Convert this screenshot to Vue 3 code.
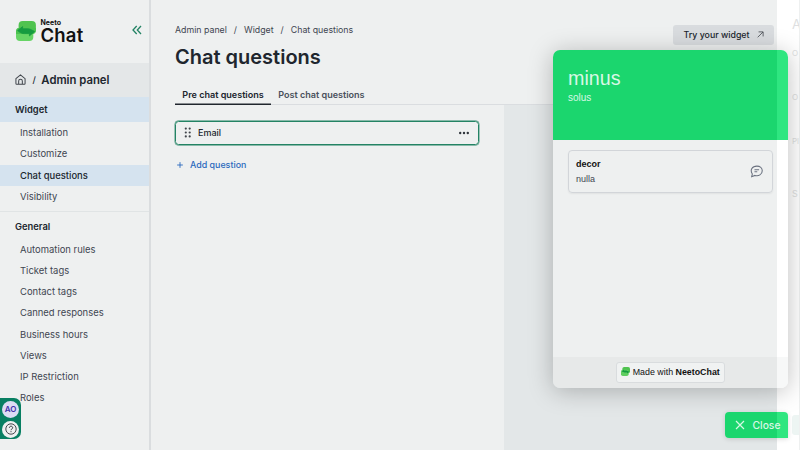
<script setup>
const widgetItems = ['Installation', 'Customize', 'Chat questions', 'Visibility']
const generalItems = ['Automation rules', 'Ticket tags', 'Contact tags', 'Canned responses', 'Business hours', 'Views', 'IP Restriction', 'Roles']
</script>

<template>
  <div class="page">
    <aside class="sidebar">
      <div class="brand">
        <svg class="logo" viewBox="0 0 20 20" width="20" height="20">
          <rect x="2.6" y="0" width="17.3" height="13" rx="4" fill="#50c350" />
          <rect x="0" y="7" width="17.3" height="13" rx="4" fill="#66d465" />
          <path d="M2.6 7h17.3v2q0 4-4 4H0v-2q0-4 2.6-4z" fill="#4cc250" />
          <path d="M1.6 9.6 6.6 5.6v2.2h5.2c2 0 3.2.8 5.4 1.9l1.4.8-5.2 4.4v-2.3H8.2c-2 0-2.6-.5-4.6-1.5z" fill="#159b40" stroke="#159b40" stroke-width=".8" stroke-linejoin="round" />
        </svg>
        <div class="wordmark"><span class="neeto">Neeto</span><span class="chat">Chat</span></div>
        <svg class="collapse" viewBox="0 0 10 10" width="10" height="10" fill="none" stroke="#238364" stroke-width="1.3"><path d="M4.7 1 1 5l3.7 4M9 1 5.3 5 9 9" /></svg>
      </div>
      <div class="panel-title">
        <svg viewBox="0 0 12 12" width="11" height="11" fill="none" stroke="#41464c" stroke-width="1.1"><path d="M1 5.1 6 .9l5 4.2v5.2q0 .8-.8.8H1.8q-.8 0-.8-.8zM4 11V7.6a2 2 0 0 1 4 0V11" /></svg>
        <span class="slash">/</span><span>Admin panel</span>
      </div>
      <div class="section active">Widget</div>
      <nav>
        <div v-for="item in widgetItems" :key="item" class="item" :class="{ active: item === 'Chat questions' }">{{ item }}</div>
      </nav>
      <div class="divider"></div>
      <div class="section general">General</div>
      <nav>
        <div v-for="item in generalItems" :key="item" class="item">{{ item }}</div>
      </nav>
    </aside>

    <main>
      <header>
        <div class="crumbs"><span>Admin panel</span><span>/</span><span>Widget</span><span>/</span><span>Chat questions</span></div>
        <h1>Chat questions</h1>
        <button class="try">Try your widget
          <svg viewBox="0 0 8 8" width="7" height="7" fill="none" stroke="#41464c" stroke-width=".9"><path d="M.8 7.2 6.8 1.2M1.8 1h5.2v5.2" /></svg>
        </button>
      </header>
      <div class="tabs"><span class="tab selected">Pre chat questions</span><span class="tab">Post chat questions</span></div>
      <div class="content">
        <section class="questions">
          <div class="question">
            <svg viewBox="0 0 8 11" width="8" height="11" fill="#41464c"><circle cx="1.8" cy="1.6" r="1.1" /><circle cx="5.7" cy="1.6" r="1.1" /><circle cx="1.8" cy="5.5" r="1.1" /><circle cx="5.7" cy="5.5" r="1.1" /><circle cx="1.8" cy="9.4" r="1.1" /><circle cx="5.7" cy="9.4" r="1.1" /></svg>
            <span class="email">Email</span>
            <svg viewBox="0 0 12 4" width="12" height="4" fill="#2f343b"><circle cx="2.2" cy="2" r="1.2" /><circle cx="6" cy="2" r="1.2" /><circle cx="9.8" cy="2" r="1.2" /></svg>
          </div>
          <div class="add"><svg viewBox="0 0 8 8" width="6" height="6" stroke="#2a69bd" stroke-width="1.2"><path d="M4 .2v7.6M.2 4h7.6" /></svg><span>Add question</span></div>
        </section>
        <div class="preview"></div>
      </div>
    </main>

    <div class="drawer">
      <span class="ghost big">A</span><span class="ghost g1">O</span><span class="ghost g2">O</span><span class="ghost g3">Pl</span><span class="ghost g4">S</span><i></i>
    </div>

    <div class="widget">
      <div class="hero"><div class="hello">minus</div><div class="sub">solus</div></div>
      <div class="body">
        <div class="card">
          <div><b>decor</b><p>nulla</p></div>
          <svg viewBox="0 0 14 14" width="13" height="13" fill="none" stroke="#6b7280" stroke-width="1.15"><path d="M1.8 12.6 2.5 9.7C-.3 5.5 2.3 1.2 7.4 1.2c3.4 0 5.8 2.2 5.8 5.1 0 4-4 6-7.8 4.9zM4.8 5.1h5M4.8 7.2h3" /></svg>
        </div>
      </div>
      <div class="foot"><div class="made">
        <svg viewBox="0 0 20 20" width="9" height="9"><rect x="3" width="17" height="14" rx="4" fill="#50c350" /><rect y="6" width="17" height="14" rx="4" fill="#5fce60" /><path d="M1.5 9.8 6.6 5.8v2h5.2l6.7 2.6-5.1 4v-2H8.2z" fill="#159b40" /></svg>
        <span>Made with <b>NeetoChat</b></span>
      </div></div>
    </div>

    <div class="close">
      <svg viewBox="0 0 10 10" width="10" height="10" stroke="#d8f8e5" stroke-width="1.2"><path d="m1 1 8 8M9 1 1 9" /></svg><span>Close</span>
    </div>

    <div class="dock">
      <span class="avatar">AO</span>
      <span class="help"><svg viewBox="0 0 12 12" width="12" height="12" fill="none" stroke="#32363b"><circle cx="6" cy="6" r="5.2" stroke-width=".9" /><path d="M4.4 4.8c0-2.2 3.3-2.1 3.3 0 0 1.2-1.7 1.1-1.7 2.4M6 8.2v1" stroke-width="1" /></svg></span>
    </div>
  </div>
</template>

<style>
body { margin: 0; overflow: hidden; }
</style>

<style scoped>
* { box-sizing: border-box; }
svg { display: block; flex: none; }
.page { position: relative; display: flex; width: 800px; height: 450px; overflow: hidden; background: #eef0f0; font-family: Inter, sans-serif; color: #20262e; white-space: nowrap; }
.sidebar { width: 151px; flex: none; border-right: 2px solid #dadddf; }
.brand { height: 62.5px; display: flex; padding: 21px 0 0 15.5px; }
.wordmark { display: flex; flex-direction: column; margin-left: 5px; width: 44px; color: #111; }
.neeto { font: 700 7px/6px Inter, sans-serif; letter-spacing: 0; margin-top: -1px; }
.chat { font: 600 18.5px/19px Inter, sans-serif; letter-spacing: .2px; }
.collapse { margin: 4px 0 0 47px; }
.panel-title { height: 34.5px; background: #e4e7e8; display: flex; align-items: center; padding-left: 14.5px; font-size: 11.3px; font-weight: 600; }
.slash { font-size: 9px; margin: 0 5.5px 0 7px; font-weight: 500; }
.section { height: 25px; line-height: 25px; padding-left: 15px; font-size: 9.4px; font-weight: 600; }
.active { background: #d5e3ef; }
.item { height: 21.25px; line-height: 21.25px; padding-left: 20px; font-size: 9.45px; color: #3e4651; }
.item.active { font-weight: 500; color: #20262e; }
.divider { height: 1px; background: #e0e4e5; margin-top: 3.5px; }
.general { height: 27px; line-height: 30px; }
main { width: 626px; flex: none; }
header { position: relative; height: 86px; padding: 23px 0 0 24px; }
.crumbs { display: flex; gap: 7px; font-size: 8.8px; line-height: 14px; color: #3e4651; }
h1 { margin: 7px 0 0; font-size: 20px; line-height: 26px; font-weight: 600; letter-spacing: 0; }
.try { position: absolute; right: 3px; top: 25px; width: 101px; height: 20px; display: flex; align-items: center; gap: 7px; padding: 0 0 1px 10.5px; border: 0; border-radius: 3px; background: #d9dcdf; color: #20262e; font: 500 8.8px Inter, sans-serif; }
.tabs { height: 19px; display: flex; margin-left: 24px; border-bottom: 1px solid #dadde0; }
.tab { height: 19px; line-height: 18px; padding: 0 7.3px; font-size: 9.05px; font-weight: 600; color: #4a515c; }
.tab.selected { color: #20262e; box-shadow: inset 0 -1.5px #20262e; }
.content { display: flex; height: 345px; }
.questions { width: 353px; padding: 15.5px 24px 0; }
.question { display: flex; align-items: center; width: 304px; height: 24.5px; border: 1px solid #238364; box-shadow: 0 0 0 .4px #238364; border-radius: 3.5px; padding: 0 8.5px 0 8px; font-size: 9px; font-weight: 500; }
.email { flex: 1; margin-left: 6px; }
.add { display: flex; align-items: center; gap: 7px; margin-top: 14px; padding-left: 2px; line-height: 12px; font-size: 8.9px; font-weight: 550; color: #2a69bd; }
.preview { flex: 1; background: #e3e7e8; }
.drawer { position: relative; width: 23px; flex: none; background: #fff; border-right: 1px solid #eef0f0; overflow: hidden; }
.drawer i { position: absolute; right: 0; top: 415px; width: 7px; height: 20px; border-radius: 3px 0 0 3px; background: #edf5f3; }
.ghost { position: absolute; left: 15px; font-size: 8px; line-height: 10px; color: #dedfe1; }
.big { top: 17px; font-size: 13px; line-height: 15px; }
.g1 { top: 48px; } .g2 { top: 92px; } .g3 { top: 136px; } .g4 { top: 189px; font-size: 9px; }
.widget { position: absolute; left: 553px; top: 50px; width: 234.5px; height: 337.5px; border-radius: 7px; display: flex; flex-direction: column; overflow: hidden; font-family: "Liberation Sans", Arial, sans-serif; box-shadow: 0 3px 24px rgba(0,0,0,.25); }
.hero { height: 90px; padding: 17px 15px; background: linear-gradient(90deg, #1bd66e 224px, #2fe680 224px); color: #d8f8e5; }
.hello { font-size: 19.7px; line-height: 22px; }
.sub { font-size: 10px; line-height: 12px; margin-top: 3px; }
.body { flex: 1; padding: 10px 15px; background: linear-gradient(90deg, #eef0f0 224px, #fff 224px); }
.card { width: 205px; height: 43px; border: 1px solid #d2d5d9; border-radius: 4px; box-shadow: 0 1px 2px rgba(0,0,0,.06); display: flex; justify-content: space-between; align-items: center; padding: 0 9px 0 7px; font-size: 9px; color: #111; }
.card p { margin: 4px 0 0; line-height: 10px; color: #3e4651; }
.card b { display: block; line-height: 11px; }
.foot { height: 31px; display: flex; justify-content: center; padding-top: 5px; background: linear-gradient(90deg, #e7e9e9 224px, #f7f8f8 224px); }
.made { width: 109px; height: 21px; display: flex; align-items: center; justify-content: center; gap: 3px; border: 1px solid #d9dcde; border-radius: 3px; background: #f0f2f2; padding-bottom: 1px; font-size: 8.85px; color: #111; }
.close { position: absolute; left: 725px; top: 412px; width: 62.5px; height: 26px; border-radius: 4px 4px 0 4px; display: flex; align-items: center; gap: 7.5px; padding-left: 10px; background: linear-gradient(90deg, #1bd66e 52px, #2fe680 52px); color: #d8f8e5; font-size: 10.3px; font-weight: 500; box-shadow: 0 1px 5px rgba(0,0,0,.15); }
.dock { position: absolute; left: 0; top: 398px; width: 21px; height: 41px; border-radius: 0 7px 7px 0; background: #087f62; display: flex; flex-direction: column; gap: 3px; padding: 2.5px 0 0 2px; }
.avatar, .help { width: 17px; height: 17px; border-radius: 50%; display: flex; align-items: center; justify-content: center; }
.avatar { background: #dcdcf3; color: #3d2fa8; font-size: 8px; font-weight: 600; }
.help { background: #eef0f0; }
</style>
